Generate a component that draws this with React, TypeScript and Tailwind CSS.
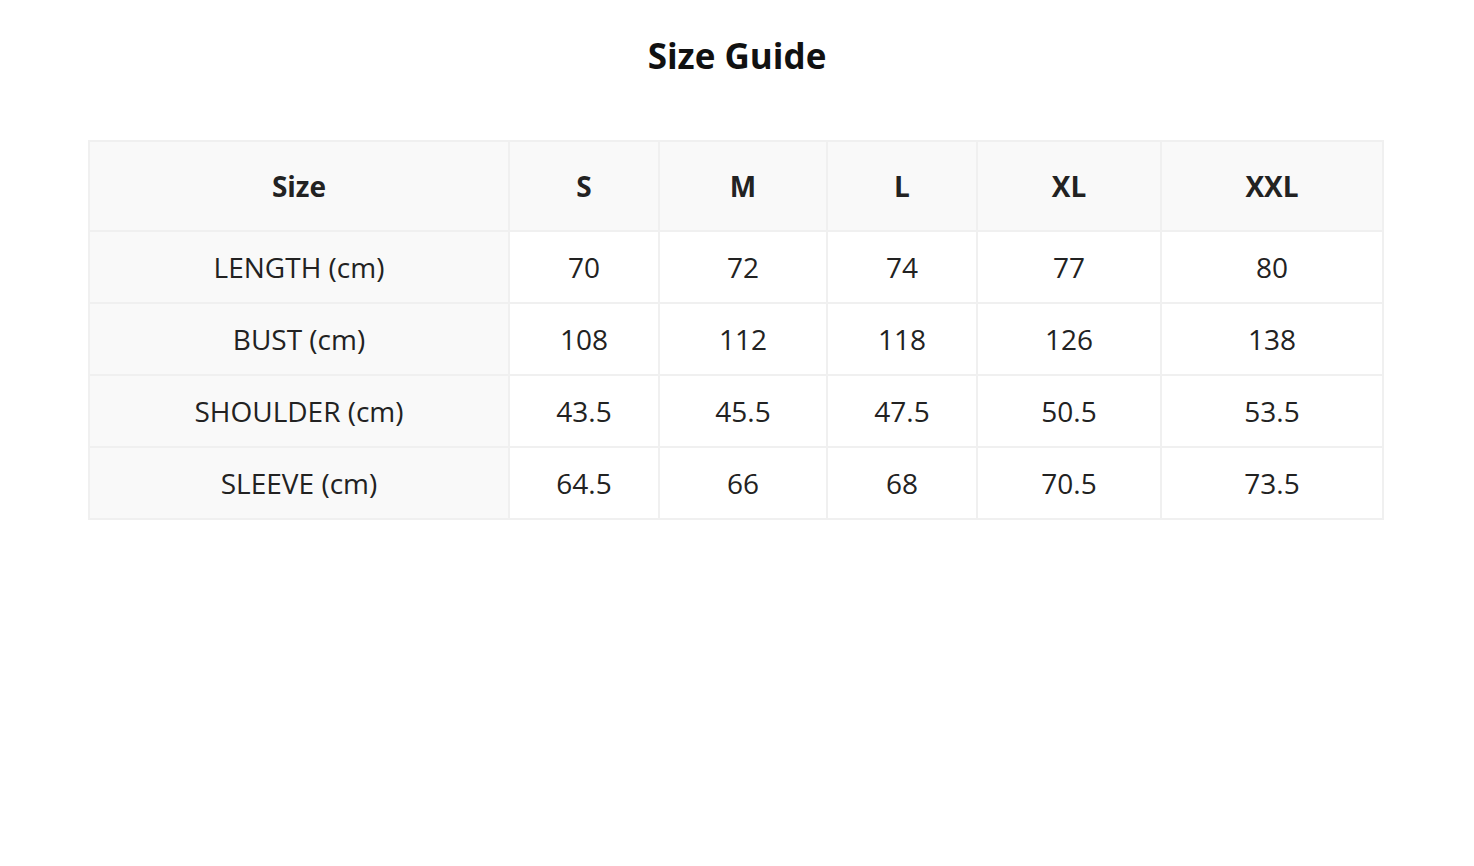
import React from "react";

const cols = ["S", "M", "L", "XL", "XXL"];
const widths = ["w-[420px]", "w-[150px]", "w-[168px]", "w-[150px]", "w-[184px]", "w-[222px]"];
const rows: [string, string[]][] = [
  ["LENGTH (cm)", ["70", "72", "74", "77", "80"]],
  ["BUST (cm)", ["108", "112", "118", "126", "138"]],
  ["SHOULDER (cm)", ["43.5", "45.5", "47.5", "50.5", "53.5"]],
  ["SLEEVE (cm)", ["64.5", "66", "68", "70.5", "73.5"]],
];

export default function App() {
  return (
    <div className="min-h-[866px] w-full bg-white text-[#222]" style={{ fontFamily: '"Open Sans", "Noto Sans", sans-serif' }}>
      <h1 className="pt-[33px] text-center text-[35px] font-bold leading-[46px] text-[#111]">Size Guide</h1>
      <div className="mx-[88px] mt-[61px]">
        <table className="w-[1296px] table-fixed border-collapse">
          <colgroup>
            {widths.map((w, i) => (
              <col key={i} className={w} />
            ))}
          </colgroup>
          <thead>
            <tr className="h-[90px] bg-[#f9f9f9]">
              <th className="border-2 border-[#f0f0f0] text-center text-[28px] font-bold">Size</th>
              {cols.map((c) => (
                <th key={c} className="border-2 border-[#f0f0f0] text-center text-[28px] font-bold">{c}</th>
              ))}
            </tr>
          </thead>
          <tbody>
            {rows.map(([label, vals]) => (
              <tr key={label} className="h-[72px]">
                <td className="border-2 border-[#f0f0f0] bg-[#f9f9f9] text-center text-[28px]">{label}</td>
                {vals.map((v, i) => (
                  <td key={i} className="border-2 border-[#f0f0f0] bg-white text-center text-[28px]">{v}</td>
                ))}
              </tr>
            ))}
          </tbody>
        </table>
      </div>
    </div>
  );
}
